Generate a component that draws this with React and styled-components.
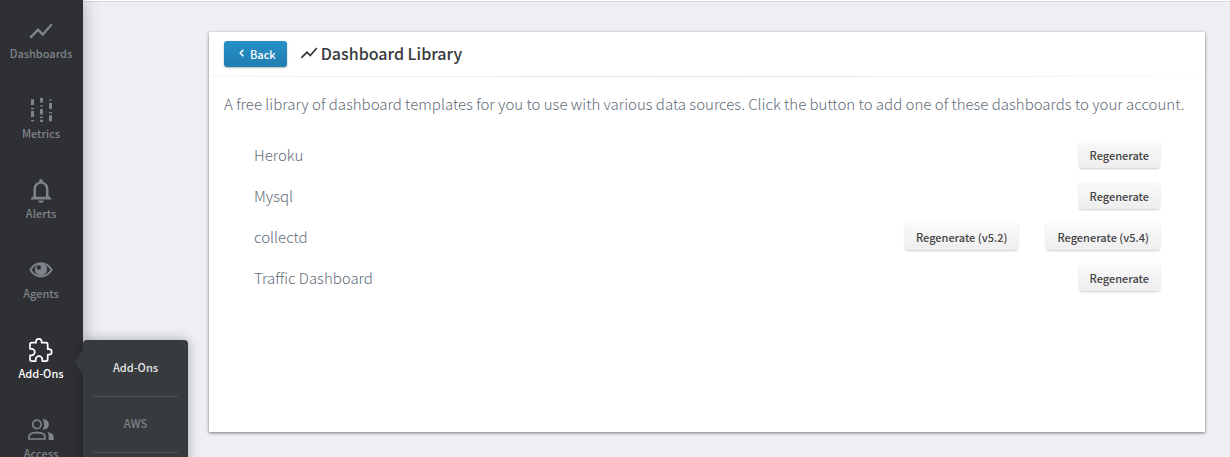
import React from 'react';
import styled, { createGlobalStyle, css } from 'styled-components';

const GlobalStyle = createGlobalStyle`
  *, *::before, *::after { box-sizing: border-box; }
  body {
    margin: 0;
    background: #eeeff4;
    color: #5f6d79;
    font-family: "Noto Sans CJK SC", "Open Sans", sans-serif;
  }
`;

const Shell = styled.div`
  display: flex;
  height: 100vh;
  overflow: hidden;
`;

const Sidebar = styled.nav`
  position: relative;
  z-index: 2;
  flex: none;
  width: 83px;
  background: #2f3034;
  box-shadow: 0 0 16px rgba(0, 0, 0, 0.3);
`;

const NavList = styled.ul`
  list-style: none;
  margin: 0;
  padding: 17px 0 0;
`;

const NavItem = styled.li`
  position: relative;
  height: 80px;
`;

const NavLink = styled.a`
  display: flex;
  flex-direction: column;
  align-items: center;
  padding-right: 1px;
  color: ${(p) => (p.$active ? '#ffffff' : '#7d848a')};
  font-size: 11px;
  font-weight: 500;
  line-height: 16px;
  text-decoration: none;
`;

const Icon = styled.svg`
  display: block;
  width: 28px;
  height: 28px;
  fill: currentColor;
`;

const Flyout = styled.ul`
  position: absolute;
  top: 3px;
  left: 83px;
  width: 105px;
  margin: 0;
  padding: 1px 10px 12px;
  list-style: none;
  background: #373b3e;
  border-radius: 4px;
  box-shadow: 0 0 12px rgba(0, 0, 0, 0.3);

  &::before {
    content: '';
    position: absolute;
    top: 9px;
    left: -8px;
    border: solid transparent;
    border-width: 13px 8px 13px 0;
    border-right-color: #373b3e;
  }
`;

const FlyoutItem = styled.li`
  height: 56px;
  border-bottom: 1px solid #4c5155;
`;

const FlyoutLink = styled.a`
  display: block;
  color: ${(p) => (p.$active ? '#e4e6e8' : '#7d848a')};
  font-size: 11px;
  font-weight: 500;
  line-height: 52px;
  text-align: center;
  text-decoration: none;
`;

const Main = styled.main`
  flex: 1;
  min-width: 0;
  display: flex;
  padding: 31px 25px 25px 126px;
  border-top: 1px solid #ffffff;
  box-shadow: inset 0 1px 0 #d5d8df;
`;

const Panel = styled.section`
  flex: 1;
  min-width: 0;
  background: #ffffff;
  box-shadow: 0 1px 3px rgba(0, 0, 0, 0.5);
`;

const PanelHeader = styled.header`
  display: flex;
  align-items: center;
  gap: 12px;
  height: 45px;
  padding: 0 15px;
  border-bottom: 1px solid;
  border-image: linear-gradient(to right, #f6f6f6, #e4e4e4 50%, #fbfbfb) 1;
`;

const buttonBase = css`
  border: 0;
  border-radius: 3px;
  font-family: inherit;
  font-size: 11px;
  font-weight: 500;
  cursor: pointer;
`;

const BackButton = styled.button`
  ${buttonBase}
  display: flex;
  align-items: center;
  gap: 6px;
  height: 26px;
  padding: 0 11px 0 15px;
  background: linear-gradient(#2590c8, #217eb0);
  box-shadow: 0 1px 2px rgba(0, 0, 0, 0.3);
  color: #ffffff;
`;

const BackArrow = styled.svg`
  width: 5px;
  height: 8px;
  margin-bottom: 3px;
  fill: none;
  stroke: currentColor;
  stroke-width: 1.5;
`;

const Title = styled.h1`
  display: flex;
  align-items: center;
  gap: 2px;
  margin: 0;
  padding-bottom: 2px;
  color: #36393c;
  font-size: 16px;
  font-weight: 500;
  line-height: 24px;
`;

const TitleIcon = styled(Icon)`
  width: 20px;
  height: 20px;
`;

const Intro = styled.p`
  margin: 0;
  padding: 15px 12px 0 15px;
  font-size: 15px;
  font-weight: 300;
  line-height: 24px;
`;

const Library = styled.ul`
  list-style: none;
  margin: 0;
  padding: 18px 45px 0;
`;

const LibraryRow = styled.li`
  display: flex;
  align-items: center;
  gap: 28px;
  height: 41px;
  font-size: 15px;
  font-weight: 300;
`;

const RowName = styled.span`
  flex: 1;
`;

const RegenerateButton = styled.button`
  ${buttonBase}
  height: 27px;
  padding: 0 11px;
  background: linear-gradient(#fafafa, #eeeeee);
  box-shadow: 0 1px 2px rgba(0, 0, 0, 0.2);
  color: #444444;
`;

const CHART = 'M3.5 18.49l6-6.01 4 4L22 6.92l-1.41-1.41-7.09 7.97-4-4L2 16.99z';

const ChartIcon = () => (
  <Icon viewBox="0 0 24 24" aria-hidden="true"><path d={CHART} /></Icon>
);

const MetricsIcon = () => (
  <Icon viewBox="0 0 28 28" aria-hidden="true">
    <path d="M4 2.300h3V8H4zM4 11h3v1.200H4zM4 14h3v6H4zM4 23h3v1.200H4zM13 1h3v4.500h-3zM13 8.200h3v1.200h-3zM13 12h3v5.500h-3zM13 19.700h3v1.200h-3zM13 22.700h3v2.300h-3zM22 2.400h3v1.200h-3zM22 6h3v6h-3zM22 15h3v1.200h-3zM22 18.300h3v6h-3z" />
  </Icon>
);

const BellIcon = () => (
  <Icon viewBox="0 0 28 28" aria-hidden="true">
    <path fillRule="evenodd" d="M14 2c1.100 0 1.800.8 1.800 1.700v1.100c3.600.9 5.700 3.800 5.700 7.500v6.700l2.700 2.300v1.200H3.900v-1.200L6.500 19v-6.700c0-3.700 2.100-6.600 5.700-7.500V3.700c0-.9.800-1.700 1.800-1.700zm0 4.800c-3.100 0-5 2.400-5 5.700v7.300h10v-7.300c0-3.300-1.900-5.700-5-5.700z" />
    <path d="M11.200 23.500h5.600c-.2 1.600-1.300 2.500-2.800 2.500s-2.600-.9-2.800-2.500z" />
  </Icon>
);

const EyeIcon = () => (
  <Icon viewBox="0 0 28 28" aria-hidden="true">
    <path fillRule="evenodd" d="M14 5.200c5 0 9 2.800 11.800 7.600C23 17.600 19 20.400 14 20.400S5 17.600 2.200 12.800C5 8 9 5.200 14 5.200zm0 1.900c-3.900 0-7 2-9.500 5.700 2.500 3.700 5.600 5.700 9.500 5.700s7-2 9.500-5.700C21 9.100 17.900 7.100 14 7.100z" />
    <path fillRule="evenodd" d="M14 6.300a6.100 6.100 0 1 1 0 12.200 6.100 6.100 0 0 1 0-12.200zm-2.200 2a2.200 2.200 0 1 0 0 4.400 2.200 2.200 0 0 0 0-4.400z" />
  </Icon>
);

const PuzzleIcon = () => (
  <Icon viewBox="0 0 28 28" aria-hidden="true">
    <path
      fill="none"
      stroke="currentColor"
      strokeWidth="1.700"
      strokeLinejoin="round"
      d="M3 7.500Q3 5.700 4.800 5.700H9V4.600a2.800 2.800 0 0 1 5.600 0V5.700h4.300q1.800 0 1.800 1.800v4.700h1.300a2.700 2.700 0 0 1 0 5.400h-1.300v4.700q0 1.800-1.800 1.800h-3.600v-1.600a3.300 3.300 0 0 0-6.600 0v1.600H4.800Q3 24.100 3 22.300v-3.900h1.500a3.300 3.300 0 0 0 0-6.600H3z"
    />
  </Icon>
);

const PeopleIcon = () => (
  <Icon viewBox="0 0 28 28" aria-hidden="true">
    <circle cx="9.900" cy="7.400" r="4.200" fill="none" stroke="currentColor" strokeWidth="1.700" />
    <path fill="none" stroke="currentColor" strokeWidth="1.700" d="M2 22v-2.200c0-2.700 3.600-4.200 8-4.200s8 1.500 8 4.200V22z" />
    <path d="M15.600 2.400c3.700-.3 6.300 1.900 6.300 5s-2.600 5.300-6.300 5c2.100-3.200 2.100-6.800 0-10zM20.500 15.300c3.700.5 6.200 2 6.200 4.500v3.100h-5v-3.100c0-1.700-.4-3.100-1.200-4.500z" />
  </Icon>
);

const NAV = [
  { label: 'Dashboards', Glyph: ChartIcon },
  { label: 'Metrics', Glyph: MetricsIcon },
  { label: 'Alerts', Glyph: BellIcon },
  { label: 'Agents', Glyph: EyeIcon },
  { label: 'Add-Ons', Glyph: PuzzleIcon, active: true, menu: ['Add-Ons', 'AWS'] },
  { label: 'Access', Glyph: PeopleIcon },
];

const LIBRARY = [
  { name: 'Heroku', actions: ['Regenerate'] },
  { name: 'Mysql', actions: ['Regenerate'] },
  { name: 'collectd', actions: ['Regenerate (v5.2)', 'Regenerate (v5.4)'] },
  { name: 'Traffic Dashboard', actions: ['Regenerate'] },
];

export default function App() {
  return (
    <Shell>
      <GlobalStyle />
      <Sidebar aria-label="Main">
        <NavList>
          {NAV.map(({ label, Glyph, active, menu }) => (
            <NavItem key={label}>
              <NavLink href="#" $active={active}>
                <Glyph />
                {label}
              </NavLink>
              {menu && (
                <Flyout>
                  {menu.map((entry, i) => (
                    <FlyoutItem key={entry}>
                      <FlyoutLink href="#" $active={i === 0}>{entry}</FlyoutLink>
                    </FlyoutItem>
                  ))}
                </Flyout>
              )}
            </NavItem>
          ))}
        </NavList>
      </Sidebar>
      <Main>
        <Panel>
          <PanelHeader>
            <BackButton type="button">
              <BackArrow viewBox="0 0 5 8" aria-hidden="true"><path d="M4.300.8L1.200 4l3.100 3.200" /></BackArrow>
              Back
            </BackButton>
            <Title>
              <TitleIcon viewBox="0 0 24 24" aria-hidden="true"><path d={CHART} /></TitleIcon>
              Dashboard Library
            </Title>
          </PanelHeader>
          <Intro>
            A free library of dashboard templates for you to use with various data sources. Click the button to add one of these dashboards to your account.
          </Intro>
          <Library>
            {LIBRARY.map(({ name, actions }) => (
              <LibraryRow key={name}>
                <RowName>{name}</RowName>
                {actions.map((action) => (
                  <RegenerateButton key={action} type="button">{action}</RegenerateButton>
                ))}
              </LibraryRow>
            ))}
          </Library>
        </Panel>
      </Main>
    </Shell>
  );
}
